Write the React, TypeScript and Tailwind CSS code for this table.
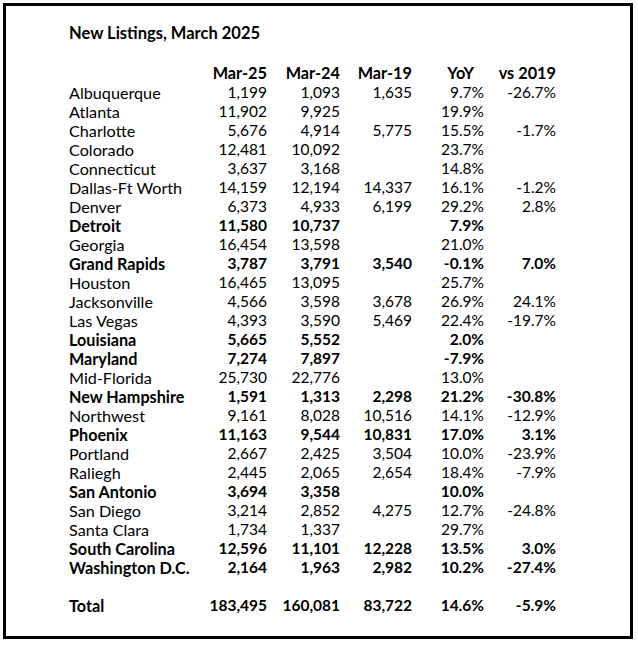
import React from "react";

type Row = { n: string; a: string; b: string; c: string; y: string; v: string; bold?: boolean };

const rows: Row[] = [
  { n: "Albuquerque", a: "1,199", b: "1,093", c: "1,635", y: "9.7%", v: "-26.7%" },
  { n: "Atlanta", a: "11,902", b: "9,925", c: "", y: "19.9%", v: "" },
  { n: "Charlotte", a: "5,676", b: "4,914", c: "5,775", y: "15.5%", v: "-1.7%" },
  { n: "Colorado", a: "12,481", b: "10,092", c: "", y: "23.7%", v: "" },
  { n: "Connecticut", a: "3,637", b: "3,168", c: "", y: "14.8%", v: "" },
  { n: "Dallas-Ft Worth", a: "14,159", b: "12,194", c: "14,337", y: "16.1%", v: "-1.2%" },
  { n: "Denver", a: "6,373", b: "4,933", c: "6,199", y: "29.2%", v: "2.8%" },
  { n: "Detroit", a: "11,580", b: "10,737", c: "", y: "7.9%", v: "", bold: true },
  { n: "Georgia", a: "16,454", b: "13,598", c: "", y: "21.0%", v: "" },
  { n: "Grand Rapids", a: "3,787", b: "3,791", c: "3,540", y: "-0.1%", v: "7.0%", bold: true },
  { n: "Houston", a: "16,465", b: "13,095", c: "", y: "25.7%", v: "" },
  { n: "Jacksonville", a: "4,566", b: "3,598", c: "3,678", y: "26.9%", v: "24.1%" },
  { n: "Las Vegas", a: "4,393", b: "3,590", c: "5,469", y: "22.4%", v: "-19.7%" },
  { n: "Louisiana", a: "5,665", b: "5,552", c: "", y: "2.0%", v: "", bold: true },
  { n: "Maryland", a: "7,274", b: "7,897", c: "", y: "-7.9%", v: "", bold: true },
  { n: "Mid-Florida", a: "25,730", b: "22,776", c: "", y: "13.0%", v: "" },
  { n: "New Hampshire", a: "1,591", b: "1,313", c: "2,298", y: "21.2%", v: "-30.8%", bold: true },
  { n: "Northwest", a: "9,161", b: "8,028", c: "10,516", y: "14.1%", v: "-12.9%" },
  { n: "Phoenix", a: "11,163", b: "9,544", c: "10,831", y: "17.0%", v: "3.1%", bold: true },
  { n: "Portland", a: "2,667", b: "2,425", c: "3,504", y: "10.0%", v: "-23.9%" },
  { n: "Raliegh", a: "2,445", b: "2,065", c: "2,654", y: "18.4%", v: "-7.9%" },
  { n: "San Antonio", a: "3,694", b: "3,358", c: "", y: "10.0%", v: "", bold: true },
  { n: "San Diego", a: "3,214", b: "2,852", c: "4,275", y: "12.7%", v: "-24.8%" },
  { n: "Santa Clara", a: "1,734", b: "1,337", c: "", y: "29.7%", v: "" },
  { n: "South Carolina", a: "12,596", b: "11,101", c: "12,228", y: "13.5%", v: "3.0%", bold: true },
  { n: "Washington D.C.", a: "2,164", b: "1,963", c: "2,982", y: "10.2%", v: "-27.4%", bold: true },
];

function DataRow({ r }: { r: Row }) {
  return (
    <div className={"grid grid-cols-[131px_67px_73px_72px_72px_72px] h-[19px] leading-[19px] " + (r.bold ? "font-bold" : "")}>
      <div className="whitespace-nowrap text-[16.2px]">{r.n}</div>
      <div className="text-right">{r.a}</div>
      <div className="text-right">{r.b}</div>
      <div className="text-right">{r.c}</div>
      <div className="text-right">{r.y}</div>
      <div className="text-right">{r.v}</div>
    </div>
  );
}

export default function App() {
  return (
    <div className="bg-white w-[638px] h-[647px] pt-[3px] pl-[3px]" style={{ fontFamily: "Lato, 'Open Sans', sans-serif" }}>
      <div className="w-[630px] h-[636px] border-[3px] border-black pl-[63px] pt-[17px] text-[15.5px] text-black">
        <div className="font-bold h-[20px] leading-[20px] text-[16.5px]">New Listings, March 2025</div>
        <div className="h-[20px]" />
        <div className="grid grid-cols-[131px_67px_73px_72px_72px_72px] h-[20px] leading-[19px] font-bold text-[16.3px]">
          <div></div>
          <div className="text-right">Mar-25</div>
          <div className="text-right">Mar-24</div>
          <div className="text-right">Mar-19</div>
          <div className="text-right pr-[10px]">YoY</div>
          <div className="text-right">vs 2019</div>
        </div>
        {rows.map((r) => (
          <DataRow key={r.n} r={r} />
        ))}
        <div className="h-[19px]" />
        <DataRow r={{ n: "Total", a: "183,495", b: "160,081", c: "83,722", y: "14.6%", v: "-5.9%", bold: true }} />
      </div>
    </div>
  );
}
